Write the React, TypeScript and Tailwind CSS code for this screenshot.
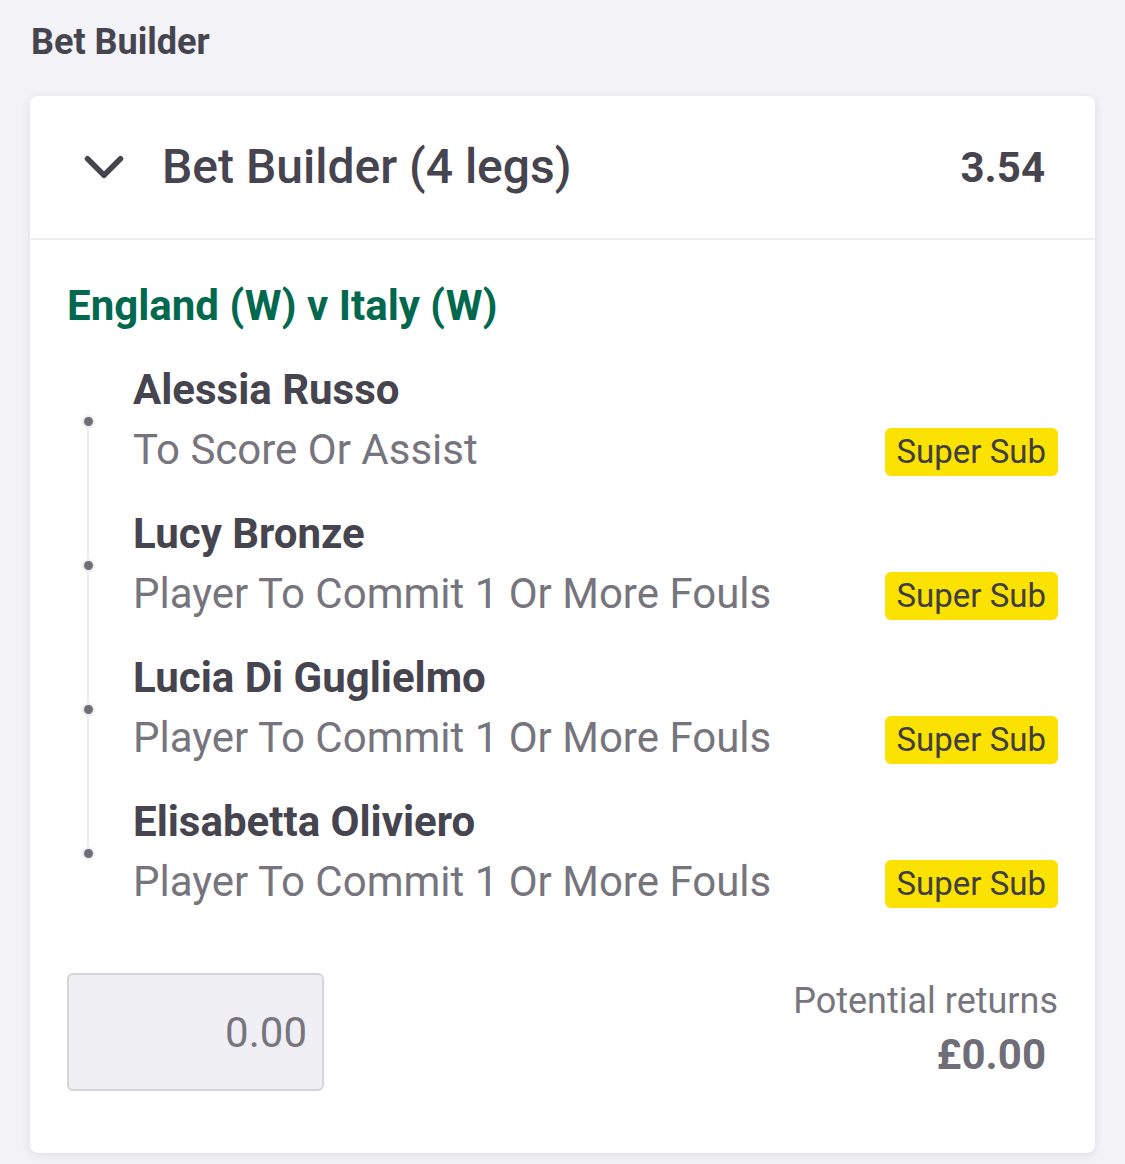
import { ChevronDown } from 'lucide-react';

const legs = [
  { player: 'Alessia Russo', market: 'To Score Or Assist' },
  { player: 'Lucy Bronze', market: 'Player To Commit 1 Or More Fouls' },
  { player: 'Lucia Di Guglielmo', market: 'Player To Commit 1 Or More Fouls' },
  { player: 'Elisabetta Oliviero', market: 'Player To Commit 1 Or More Fouls' },
];

export default function App() {
  return (
    <div className="min-h-[1164px] bg-[#f2f2f7] px-[30px] pt-[20px] pb-[12px] font-['Roboto',sans-serif]">
      <h1 className="pl-[1px] text-[36px] font-bold leading-[44px] text-[#45444f]">Bet Builder</h1>

      <div className="mt-[32px] rounded-[8px] bg-white shadow-[0_2px_10px_rgba(40,40,70,0.10)]">
        {/* Header */}
        <div className="flex h-[144px] items-center border-b-2 border-[#eeeef3] pl-[41px] pr-[50px]">
          <ChevronDown className="h-[66px] w-[66px] text-[#45444f]" strokeWidth={2} />
          <span className="ml-[25px] text-[48px] font-medium leading-none text-[#45444f]">
            Bet Builder (4 legs)
          </span>
          <span className="ml-auto text-[42px] font-bold text-[#45444f]">3.54</span>
        </div>

        {/* Body */}
        <div className="pl-[37px] pr-[37px] pt-[40px] pb-[62px]">
          <div className="text-[42px] font-bold leading-[52px] text-[#02694f]">England (W) v Italy (W)</div>

          <div className="relative mt-[28px] flex flex-col gap-[24px]">
            <div className="absolute left-[20px] top-[60px] bottom-[60px] w-[2px] bg-[#ebebf0]" />
            {legs.map((leg) => (
              <div key={leg.player} className="relative pl-[66px]">
                <span className="absolute left-[15px] top-[55px] h-[13px] w-[13px] rounded-full border-2 border-[#ebebf0] bg-[#6f6e78]" />
                <div className="text-[42px] font-bold leading-[60px] text-[#45444f]">{leg.player}</div>
                <div className="flex h-[60px] items-center justify-between">
                  <span className="text-[42px] leading-[60px] text-[#76757d]">{leg.market}</span>
                  <span className="mt-[4px] rounded-[6px] bg-[#fbe200] px-[12px] text-[33px] leading-[48px] text-[#3f3e43]">
                    Super Sub
                  </span>
                </div>
              </div>
            ))}
          </div>

          <div className="mt-[61px] flex items-start justify-between">
            <div className="flex h-[118px] w-[257px] items-center justify-end rounded-[6px] border-2 border-[#d4d4d9] bg-[#f0f0f4] pr-[15px]">
              <span className="text-[42px] text-[#77767e]">0.00</span>
            </div>
            <div className="flex flex-col items-end pt-[6px]">
              <span className="text-[36px] leading-[44px] text-[#77767e]">Potential returns</span>
              <span className="mt-[10px] pr-[12px] text-[42px] font-bold leading-[44px] text-[#6f6e78]">£0.00</span>
            </div>
          </div>
        </div>
      </div>
    </div>
  );
}
